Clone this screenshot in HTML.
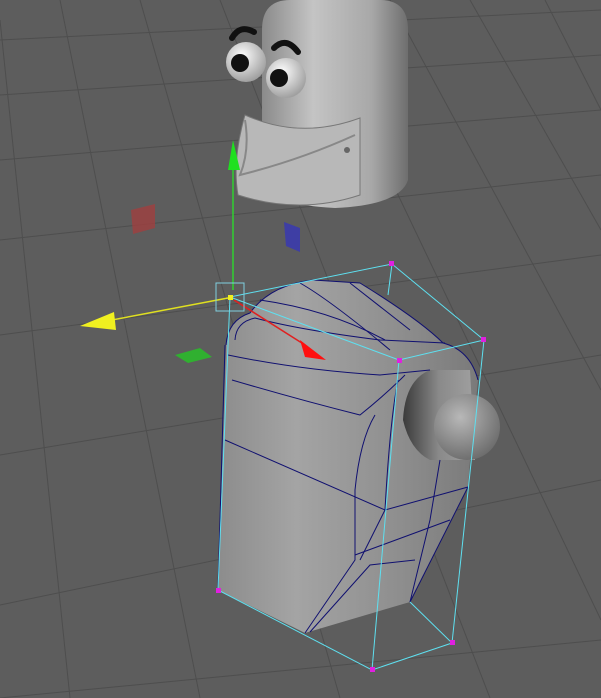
<!DOCTYPE html>
<html><head><meta charset="utf-8"><style>
html,body{margin:0;padding:0;background:#5c5c5c;overflow:hidden}
svg{display:block}
</style></head><body>
<svg width="601" height="698" viewBox="0 0 601 698" xmlns="http://www.w3.org/2000/svg">
<defs>
<linearGradient id="cyl" x1="0" x2="1" y1="0" y2="0">
<stop offset="0" stop-color="#8a8a8a"/><stop offset="0.35" stop-color="#c4c4c4"/><stop offset="0.75" stop-color="#a8a8a8"/><stop offset="1" stop-color="#6e6e6e"/></linearGradient>
<linearGradient id="body" x1="0" x2="1" y1="0" y2="0">
<stop offset="0" stop-color="#8c8c8c"/><stop offset="0.3" stop-color="#a4a4a4"/><stop offset="0.7" stop-color="#8e8e8e"/><stop offset="1" stop-color="#7a7a7a"/></linearGradient>
<linearGradient id="nub" x1="0" x2="1" y1="0" y2="0">
<stop offset="0" stop-color="#3a3a3a"/><stop offset="0.5" stop-color="#8a8a8a"/><stop offset="1" stop-color="#a0a0a0"/></linearGradient>
<radialGradient id="sph" cx="0.4" cy="0.35" r="0.7"><stop offset="0" stop-color="#b8b8b8"/><stop offset="1" stop-color="#6a6a6a"/></radialGradient>
<radialGradient id="eye" cx="0.4" cy="0.35" r="0.7"><stop offset="0" stop-color="#ffffff"/><stop offset="1" stop-color="#9a9a9a"/></radialGradient>
</defs>
<rect width="601" height="698" fill="#5d5d5d"/>
<g stroke="#4e4e4e" stroke-width="1" fill="none">
<line x1="0" y1="40" x2="601" y2="10"/><line x1="0" y1="95" x2="601" y2="55"/>
<line x1="0" y1="160" x2="601" y2="110"/><line x1="0" y1="240" x2="601" y2="175"/>
<line x1="0" y1="335" x2="601" y2="255"/><line x1="0" y1="455" x2="601" y2="355"/>
<line x1="0" y1="605" x2="601" y2="480"/><line x1="0" y1="698" x2="601" y2="640"/>
<line x1="0" y1="20" x2="70" y2="698"/><line x1="60" y1="0" x2="200" y2="698"/>
<line x1="140" y1="0" x2="340" y2="698"/><line x1="220" y1="0" x2="490" y2="698"/>
<line x1="305" y1="0" x2="601" y2="620"/><line x1="390" y1="0" x2="601" y2="390"/>
<line x1="470" y1="0" x2="601" y2="230"/><line x1="545" y1="0" x2="601" y2="110"/>
</g>
<!-- upper character -->
<path d="M262 30 Q262 0 290 0 L380 0 Q408 0 408 30 L408 180 Q400 205 335 208 Q270 205 262 180 Z" fill="url(#cyl)"/>
<path d="M245 115 Q300 140 360 118 L360 195 Q300 215 238 195 Q232 160 245 115 Z" fill="#b8b8b8" stroke="#777" stroke-width="1"/>
<path d="M245 120 Q250 150 240 175 Q300 160 355 135" fill="none" stroke="#888" stroke-width="2"/>
<circle cx="347" cy="150" r="3" fill="#666"/>
<circle cx="246" cy="62" r="20" fill="url(#eye)"/>
<circle cx="286" cy="78" r="20" fill="url(#eye)"/>
<circle cx="240" cy="63" r="9" fill="#111"/>
<circle cx="279" cy="78" r="9" fill="#111"/>
<path d="M232 38 Q240 24 254 32" stroke="#111" stroke-width="6" fill="none" stroke-linecap="round"/>
<path d="M274 48 Q286 36 298 52" stroke="#111" stroke-width="6" fill="none" stroke-linecap="round"/>
<!-- plane handles -->
<path d="M131 210 L155 204 L155 228 L133 234 Z" fill="#a04040" opacity="0.8"/>
<path d="M284 222 L300 228 L300 252 L286 246 Z" fill="#3838b0" opacity="0.85"/>
<path d="M175 355 L200 348 L212 357 L188 363 Z" fill="#30b030"/>
<!-- lower object -->
<path d="M226 345 Q228 320 250 313 Q270 285 313 280 L360 283 Q420 320 443 343 Q470 350 478 380 L470 460 L468 487 L410 602 L305 633 L218 590 Z" fill="url(#body)"/>
<path d="M403 420 Q405 380 430 370 L470 370 L475 460 L430 460 Q410 450 403 420 Z" fill="url(#nub)"/>
<circle cx="467" cy="427" r="33" fill="url(#sph)"/>
<g stroke="#101070" stroke-width="1" fill="none">
<path d="M226 345 Q228 320 250 313 Q270 285 313 280 L360 283 Q420 320 443 343 Q470 350 478 380"/>
<path d="M235 340 Q236 322 255 318 Q300 330 380 340 L445 343"/>
<path d="M228 355 Q300 370 380 375 L430 370"/>
<path d="M232 380 Q300 400 360 415 Q385 395 405 375"/>
<path d="M225 440 L385 510 L468 487"/>
<path d="M375 415 Q360 440 355 490 L355 560 L305 633"/>
<path d="M398 380 Q390 420 385 510 L360 560"/>
<path d="M440 460 L430 520 L410 602"/>
<path d="M355 555 L450 520"/>
<path d="M310 632 L370 565 L415 560"/>
<path d="M260 300 Q330 310 385 340"/><path d="M300 283 Q330 300 390 350"/>
<path d="M350 283 L410 330"/>
<path d="M218 590 L225 345"/>
<path d="M410 602 L468 487"/>
</g>
<!-- cyan bbox -->
<g stroke="#5ee0f0" stroke-width="1" fill="none">
<path d="M230 297 L392 264 L484 340 L399 360 Z"/>
<path d="M218 590 L372 670 L452 643 L410 602"/>
<line x1="230" y1="297" x2="218" y2="590"/><line x1="399" y1="360" x2="372" y2="670"/>
<line x1="484" y1="340" x2="452" y2="643"/><line x1="392" y1="264" x2="388" y2="295"/>
</g>
<g fill="#e020e0">
<rect x="389" y="261" width="5" height="5"/><rect x="481" y="337" width="5" height="5"/>
<rect x="397" y="358" width="5" height="5"/><rect x="216" y="588" width="5" height="5"/>
<rect x="370" y="667" width="5" height="5"/><rect x="450" y="640" width="5" height="5"/>
</g>
<!-- gizmo -->
<line x1="233" y1="290" x2="233" y2="168" stroke="#30d030" stroke-width="1.5"/>
<path d="M228 170 L233 140 L240 170 Z" fill="#20e020"/>
<line x1="228" y1="298" x2="112" y2="320" stroke="#e0e020" stroke-width="1.5"/>
<path d="M80 326 L114 312 L116 330 Z" fill="#f0f020"/>
<line x1="234" y1="300" x2="305" y2="345" stroke="#e02020" stroke-width="1.5"/>
<path d="M300 340 L326 360 L305 357 Z" fill="#ff1010"/>
<rect x="216" y="283" width="28" height="28" fill="none" stroke="#80d0e0" stroke-width="1"/>
<rect x="228" y="295" width="5" height="5" fill="#f0f020"/>
</svg>
</body></html>
